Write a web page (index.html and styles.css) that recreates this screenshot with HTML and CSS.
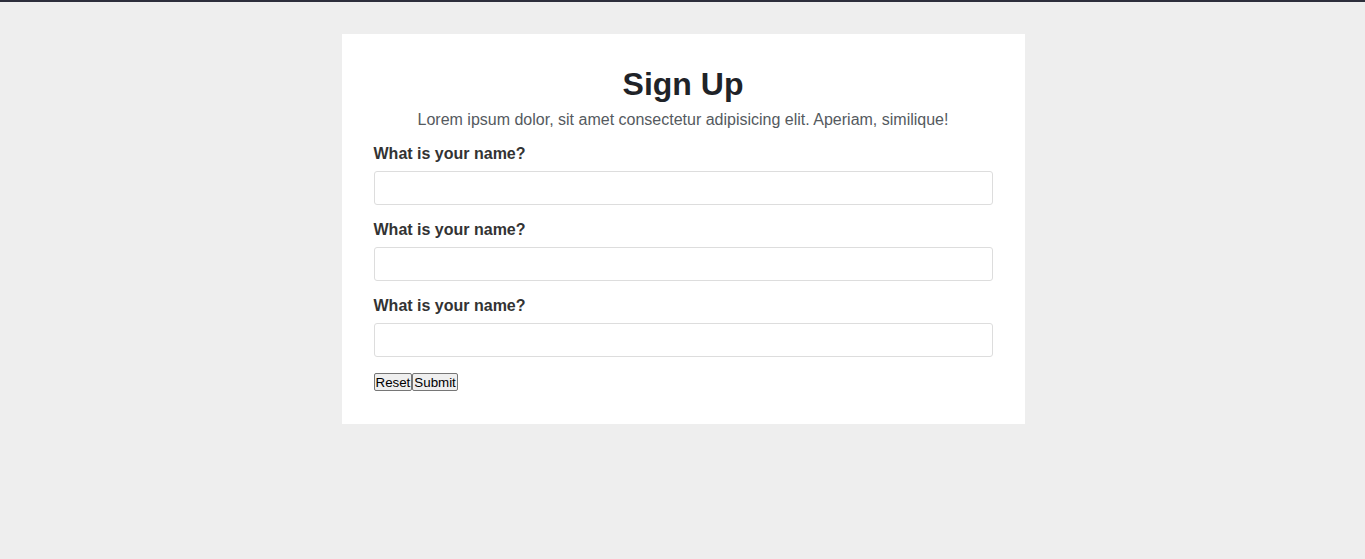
FILE: index.html
```html
<!DOCTYPE html>
<html lang="en">
<head>
<meta charset="utf-8">
<title>Sign Up</title>
<link rel="stylesheet" href="styles.css">
</head>
<body>
<main class="page">
  <form class="card">
    <h1 class="title">Sign Up</h1>
    <p class="subtitle">Lorem ipsum dolor, sit amet consectetur adipisicing elit. Aperiam, similique!</p>
    <div class="field">
      <label class="label" for="n1">What is your name?</label>
      <input class="input" id="n1" type="text">
    </div>
    <div class="field">
      <label class="label" for="n2">What is your name?</label>
      <input class="input" id="n2" type="text">
    </div>
    <div class="field">
      <label class="label" for="n3">What is your name?</label>
      <input class="input" id="n3" type="text">
    </div>
    <div class="actions"><button class="btn" type="reset">Reset</button><button class="btn" type="submit">Submit</button></div>
  </form>
</main>
</body>
</html>
```
FILE: styles.css
```css
* { box-sizing: border-box; }
html, body { margin: 0; padding: 0; }
body {
  background: #eeeeee;
  border-top: 2px solid #2d2e3b;
  font-family: "Liberation Sans", Arial, sans-serif;
  min-height: 559px;
}
.page {
  padding: 32px 0 0 1px;
  display: flex;
  justify-content: center;
}
.card {
  width: 683px;
  background: #ffffff;
  padding: 32px 32px 33px;
}
.title {
  margin: 0 0 8px;
  font-size: 32px;
  font-weight: bold;
  text-align: center;
  color: #1f2328;
  line-height: normal;
}
.subtitle {
  margin: 0 0 16px;
  font-size: 16px;
  text-align: center;
  color: #555a60;
}
.field {
  margin-bottom: 16px;
}
.label {
  display: block;
  margin-bottom: 8px;
  font-size: 16px;
  font-weight: bold;
  color: #333333;
}
.input {
  display: block;
  width: 100%;
  height: 34px;
  border: 1px solid #dddddd;
  border-radius: 3px;
  background: #fff;
  font-family: inherit;
  font-size: 16px;
  padding: 0 8px;
}
.actions {
  display: flex;
}
.btn {
  font-family: "Liberation Sans", Arial, sans-serif;
  font-size: 13.333px;
  color: #000;
  background: #efefef;
  border: 1px solid #767676;
  border-radius: 2px;
  padding: 0 1px;
  height: 18px;
  line-height: 15px;
}
```
